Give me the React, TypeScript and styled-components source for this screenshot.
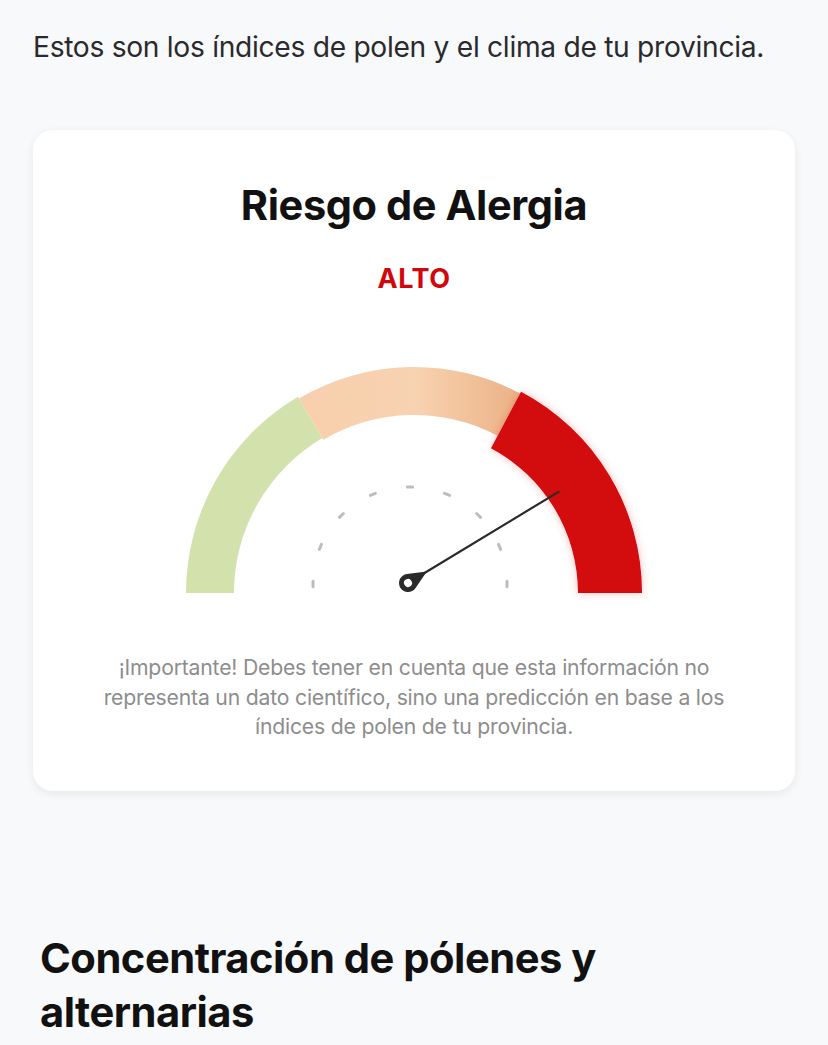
import styled, { createGlobalStyle } from 'styled-components';

const GlobalStyle = createGlobalStyle`
  body {
    margin: 0;
    background: #f8f9fb;
    font-family: Inter, "Noto Sans", sans-serif;
    -webkit-font-smoothing: antialiased;
  }
`;

// gauge geometry (svg coords)
const CX = 235;
const CY = 233;

const pt = (r: number, deg: number, cx = CX, cy = CY) => {
  const a = (deg * Math.PI) / 180;
  return [cx + r * Math.cos(a), cy - r * Math.sin(a)];
};

const band = (rOut: number, rIn: number, from: number, to: number) => {
  const [x1, y1] = pt(rOut, from);
  const [x2, y2] = pt(rOut, to);
  const [x3, y3] = pt(rIn, to);
  const [x4, y4] = pt(rIn, from);
  return `M ${x1} ${y1} A ${rOut} ${rOut} 0 0 1 ${x2} ${y2} L ${x3} ${y3} A ${rIn} ${rIn} 0 0 0 ${x4} ${y4} Z`;
};

const Gauge = () => {
  const ticks = [0, 22.5, 45, 67.5, 90, 112.5, 135, 157.5, 180];
  return (
    <GaugeSvg width="470" height="245" viewBox="0 0 470 245">
      <defs>
        <linearGradient id="mid" x1="70" y1="0" x2="345" y2="0" gradientUnits="userSpaceOnUse">
          <stop offset="0" stopColor="#f7cdac" />
          <stop offset="0.6" stopColor="#f8d3b1" />
          <stop offset="1" stopColor="#ebb084" />
        </linearGradient>
        <filter id="glow" x="-20%" y="-20%" width="140%" height="140%">
          <feDropShadow dx="0" dy="0" stdDeviation="4" floodColor="#d4070b" floodOpacity="0.25" />
        </filter>
      </defs>
      <path d={band(228, 180, 180, 120.6)} fill="#d3e1ad" />
      <path d={band(226, 178, 120.6, 62)} fill="url(#mid)" />
      <path d={band(228, 164, 62, 0)} fill="#d3070b" filter="url(#glow)" />
      {ticks.map((t) => {
        const [x1, y1] = pt(97, t - 1.6, 231, 224);
        const [x2, y2] = pt(97, t + 1.6, 231, 224);
        return (
          <line key={t} x1={x1} y1={y1} x2={x2} y2={y2} stroke="#bdbdbd" strokeWidth="3" strokeLinecap="round" />
        );
      })}
      <g transform="translate(229 223) rotate(-31.2)">
        <line x1="0" y1="0" x2="176" y2="0" stroke="#2a2a2a" strokeWidth="2.2" strokeLinecap="round" />
        <path d="M 3.67 -8.22 L 22 0 L 3.67 8.22 A 9 9 0 1 1 3.67 -8.22 Z" fill="#2a2a2a" />
        <circle cx="0" cy="0" r="4" fill="#ffffff" />
      </g>
    </GaugeSvg>
  );
};

const App = () => {
  return (
    <Page>
      <GlobalStyle />
      <Intro>Estos son los índices de polen y el clima de tu provincia.</Intro>
      <RiskCard>
        <CardTitle>Riesgo de Alergia</CardTitle>
        <Level>ALTO</Level>
        <Gauge />
        <Disclaimer>
          ¡Importante! Debes tener en cuenta que esta información no representa un dato científico, sino una
          predicción en base a los índices de polen de tu provincia.
        </Disclaimer>
      </RiskCard>
      <SectionTitle>Concentración de pólenes y alternarias</SectionTitle>
    </Page>
  );
};

export default App;

const Page = styled.div`
  padding: 0 33px;
  height: 1045px;
  overflow: hidden;
`;

const Intro = styled.p`
  margin: 0;
  padding-top: 29px;
  font-size: 28.2px;
  line-height: 36px;
  color: #2a2a2c;
  letter-spacing: -0.3px;
`;

const RiskCard = styled.div`
  margin-top: 65px;
  background: #ffffff;
  border-radius: 20px;
  box-shadow: 0 3px 10px rgba(0, 0, 0, 0.07);
  display: flex;
  flex-direction: column;
  align-items: center;
  padding: 49px 50px 49px;
`;

const CardTitle = styled.h2`
  margin: 0;
  font-size: 41.5px;
  line-height: 52px;
  font-weight: 700;
  color: #111111;
  letter-spacing: -0.4px;
`;

const Level = styled.div`
  margin-top: 32px;
  font-size: 27px;
  line-height: 32px;
  font-weight: 700;
  color: #d0070b;
  letter-spacing: 0.5px;
`;

const GaugeSvg = styled.svg`
  display: block;
  margin-top: 65px;
`;

const Disclaimer = styled.p`
  margin: 48px 0 0;
  font-size: 21.2px;
  line-height: 29.5px;
  color: #8d8d8d;
  text-align: center;
  letter-spacing: -0.2px;
`;

const SectionTitle = styled.h2`
  margin: 140px 0 0;
  padding-left: 7px;
  max-width: 620px;
  font-size: 41.7px;
  line-height: 54px;
  font-weight: 700;
  color: #111111;
  letter-spacing: -0.5px;
`;
